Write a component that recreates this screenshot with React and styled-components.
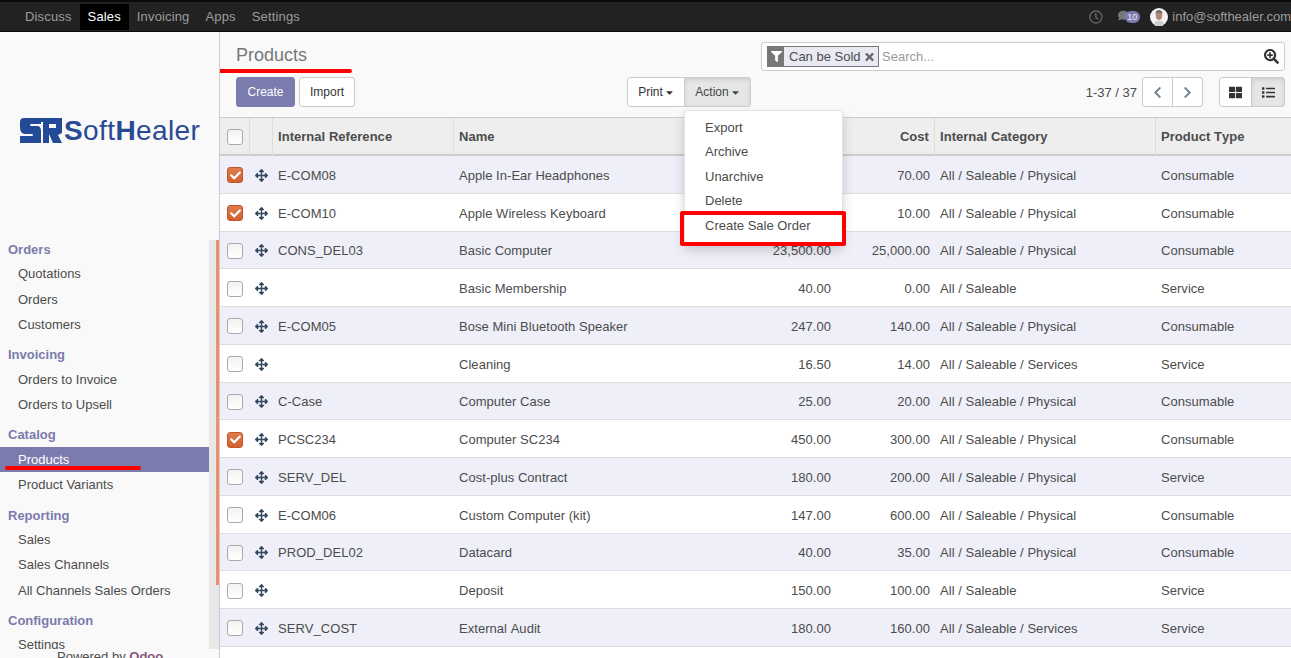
import styled, { createGlobalStyle } from "styled-components";
import {
  FaArrowsAlt,
  FaCaretDown,
  FaCheck,
  FaChevronLeft,
  FaChevronRight,
  FaComment,
  FaFilter,
  FaList,
  FaRegClock,
  FaSearchPlus,
  FaThLarge,
  FaTimes,
} from "react-icons/fa";

const GlobalStyle = createGlobalStyle`
  html, body {
    margin: 0;
    height: 100%;
    overflow: hidden;
    background: #fff;
    font-family: "Liberation Sans", Arial, sans-serif;
    font-size: 13px;
    color: #4c4c4c;
  }
  * { box-sizing: border-box; }
`;

const Page = styled.div`
  display: flex;
  flex-direction: column;
  width: 1291px;
  height: 658px;
  overflow: hidden;
`;

const TopBar = styled.header`
  display: flex;
  align-items: center;
  justify-content: space-between;
  flex: none;
  height: 32px;
  padding-left: 17px;
  background: #222;
  border-top: 2px solid #0a0a0a;
  border-bottom: 1px solid #0a0a0a;
  overflow: hidden;
`;

const NavLinks = styled.nav`
  display: flex;
  align-items: center;
  letter-spacing: 0.15px;
`;

const NavLink = styled.a`
  display: flex;
  align-items: center;
  height: 26px;
  padding: 0 8px;
  color: ${(p) => (p.$active ? "#fff" : "#9d9d9d")};
  background: ${(p) => (p.$active ? "#000" : "transparent")};
`;

const Systray = styled.div`
  display: flex;
  align-items: center;
  flex: none;
  width: 202px;
  color: #666;
  white-space: nowrap;
`;

const ClockIcon = styled(FaRegClock)`
  width: 14px;
  height: 14px;
  margin-right: 15px;
`;

const MessagesIcon = styled.span`
  position: relative;
  display: inline-flex;
  width: 22px;
  height: 14px;
  margin-right: 11px;
  color: #777;
  font-size: 11px;
`;

const Badge = styled.span`
  position: absolute;
  top: 1px;
  left: 7px;
  width: 15px;
  height: 12px;
  border-radius: 6px;
  background: #7c7bad;
  color: #e8e8f4;
  font-size: 9px;
  line-height: 12px;
  text-align: center;
`;

const Avatar = styled.svg`
  flex: none;
  width: 18px;
  height: 18px;
  margin-right: 4px;
`;

const UserMail = styled.span`
  color: #9d9d9d;
`;

const Body = styled.div`
  display: flex;
  flex: 1;
  min-height: 0;
`;

const Sidebar = styled.aside`
  display: flex;
  flex-direction: column;
  flex: none;
  width: 220px;
  background: #f9f9f9;
  border-right: 1px solid #ccc;
`;

const LogoBox = styled.div`
  display: flex;
  align-items: flex-start;
  gap: 2px;
  flex: none;
  height: 208px;
  padding: 86px 0 0 20px;
`;

const LogoMark = styled.svg`
  flex: none;
  width: 42px;
  height: 25px;
`;

const LogoText = styled.span`
  color: #2a4a94;
  font-size: 28px;
  line-height: 26px;
  letter-spacing: 0.4px;
  white-space: nowrap;
  b { font-weight: 700; }
`;

const MenuScroller = styled.div`
  display: flex;
  flex: none;
  height: 409px;
  overflow: hidden;
`;

const Menu = styled.div`
  flex: none;
  width: 209px;
`;

const ScrollTrack = styled.div`
  display: flex;
  justify-content: flex-end;
  flex: none;
  width: 10px;
  background: #e7e7e7;
`;

const ScrollThumb = styled.div`
  width: 3px;
  height: 345px;
  background: #f0906a;
`;

const MenuHeading = styled.div`
  height: 18px;
  margin: ${(p) => (p.$first ? "0" : "8.1px")} 0 3.4px;
  padding-left: 8px;
  color: #7c7bad;
  font-weight: 700;
  line-height: 20px;
`;

const MenuItem = styled.a`
  position: relative;
  display: block;
  height: 25.3px;
  padding-left: 18px;
  line-height: 25.3px;
  color: ${(p) => (p.$active ? "#fff" : "#4c4c4c")};
  background: ${(p) => (p.$active ? "#7c7bad" : "transparent")};
`;

const SidebarMark = styled.span`
  position: absolute;
  left: 5px;
  top: 19px;
  width: 136px;
  height: 4px;
  border-radius: 2px;
  background: #f00;
`;

const PoweredBy = styled.div`
  flex: none;
  padding-left: 57px;
  color: #4c4c4c;
  line-height: 15px;
  b { color: #875a7b; }
`;

const Main = styled.main`
  display: flex;
  flex-direction: column;
  flex: 1;
  min-width: 0;
  overflow: hidden;
`;

const ControlPanel = styled.section`
  flex: none;
  height: 86px;
  padding: 10px 6px 0 16px;
  background: #f9f9f9;
  border-bottom: 1px solid #ccc;
`;

const PanelTop = styled.div`
  display: flex;
  justify-content: space-between;
  align-items: flex-start;
  height: 29px;
  margin-bottom: 6px;
`;

const Title = styled.h1`
  position: relative;
  margin: 0;
  color: #777;
  font-size: 18px;
  font-weight: 400;
  line-height: 26px;
`;

const TitleMark = styled.span`
  position: absolute;
  left: -21px;
  top: 27px;
  width: 137px;
  height: 4px;
  border-radius: 2px;
  background: #f00;
`;

const SearchBox = styled.div`
  display: flex;
  align-items: center;
  width: 524px;
  height: 29px;
  padding: 0 5px;
  background: #fff;
  border: 1px solid #ccc;
  border-radius: 3px;
`;

const Facet = styled.div`
  display: flex;
  align-items: center;
  flex: none;
  width: 112px;
  height: 21px;
  background: #e9e9f3;
  border: 1px solid #777;
`;

const FacetIcon = styled.span`
  display: flex;
  align-items: center;
  justify-content: center;
  width: 16px;
  height: 100%;
  margin-right: 5px;
  background: #777;
  color: #fff;
  font-size: 11px;
`;

const FacetClose = styled(FaTimes)`
  width: 11px;
  height: 12px;
  margin-left: 3px;
  color: #666;
`;

const SearchHint = styled.span`
  flex: 1;
  margin-left: 3px;
  color: #999;
`;

const SearchIcon = styled(FaSearchPlus)`
  width: 15px;
  height: 15px;
  color: #333;
`;

const PanelBottom = styled.div`
  display: grid;
  grid-template-columns: 391px 1fr auto;
  align-items: center;
  height: 30px;
`;

const Buttons = styled.div`
  display: flex;
  gap: 4px;
`;

const Button = styled.button`
  width: ${(p) => p.$w}px;
  height: 30px;
  padding: 0;
  font: inherit;
  font-size: 12px;
  color: ${(p) => (p.$primary ? "#fff" : "#333")};
  background: ${(p) => (p.$primary ? "#7c7bad" : "#fff")};
  border: 1px solid ${(p) => (p.$primary ? "#7c7bad" : "#ccc")};
  border-radius: 3px;
`;

const Group = styled.div`
  position: relative;
  display: inline-flex;
  width: fit-content;
  height: 30px;
`;

const GroupButton = styled.button`
  display: flex;
  align-items: center;
  justify-content: center;
  width: ${(p) => p.$w}px;
  height: 30px;
  padding: 0;
  margin-left: -1px;
  font: inherit;
  font-size: 12px;
  color: ${(p) => (p.$active ? "#444" : "#333")};
  background: ${(p) => (p.$active ? "#e6e6e6" : "#fff")};
  border: 1px solid #ccc;
  box-shadow: ${(p) => (p.$active ? "inset 0 2px 4px rgba(0,0,0,.1)" : "none")};
  &:first-child { margin-left: 0; border-radius: 3px 0 0 3px; }
  &:last-of-type { border-radius: 0 3px 3px 0; }
`;

const Caret = styled(FaCaretDown)`
  width: 9px;
  height: 11px;
  margin: 1px 0 0 2px;
`;

const Dropdown = styled.div`
  position: absolute;
  z-index: 5;
  top: 33px;
  left: 57px;
  width: 159px;
  height: 134px;
  padding: 5px 0;
  background: #fff;
  border: 1px solid #e2e2e2;
  border-radius: 3px;
  box-shadow: 0 6px 12px rgba(0, 0, 0, 0.175);
`;

const DropdownItem = styled.div`
  height: 24.4px;
  padding-left: 20px;
  line-height: 24.4px;
  color: #4c4c4c;
`;

const HighlightBox = styled.div`
  position: absolute;
  top: 100px;
  left: -5px;
  width: 166px;
  height: 35px;
  border: 4px solid #f00;
  border-radius: 2px;
`;

const PagerArea = styled.div`
  display: flex;
  align-items: center;
`;

const PagerText = styled.span`
  margin-right: 5px;
  color: #4c4c4c;
`;

const ArrowIcon = styled.span`
  display: flex;
  color: #7a8590;
  font-size: 13px;
`;

const ViewGroup = styled(Group)`
  margin-left: 16px;
`;

const ViewIcon = styled.span`
  display: flex;
  color: #333;
  font-size: 13px;
`;

const GRID = "30px 23px 181px 246px 136px 99px 221px 135px";

const ListTable = styled.div`
  flex: none;
  width: 1071px;
  letter-spacing: 0.04px;
  font-kerning: none;
`;

const HeaderRow = styled.div`
  display: grid;
  grid-template-columns: ${GRID};
  height: 38px;
  background: #eee;
  border-bottom: 2px solid #ccc;
  font-weight: 700;
`;

const HeaderCell = styled.div`
  padding: 0 5px;
  line-height: 38px;
  text-align: ${(p) => (p.$right ? "right" : "left")};
  border-right: 1px solid ${(p) => (p.$last ? "transparent" : "#ddd")};
  white-space: nowrap;
  display: ${(p) => (p.$check ? "flex" : "block")};
  align-items: center;
`;

const Row = styled.div`
  display: grid;
  grid-template-columns: ${GRID};
  align-items: center;
  height: 37.75px;
  padding-top: 2px;
  background: ${(p) => (p.$striped ? "#eeeff8" : "#fff")};
  border-bottom: 1px solid #ddd;
`;

const Cell = styled.div`
  padding: 0 5px;
  text-align: ${(p) => (p.$right ? "right" : "left")};
  white-space: nowrap;
`;

const Check = styled.span`
  display: flex;
  align-items: center;
  justify-content: center;
  width: 16px;
  height: 16px;
  margin-left: 2px;
  border: 1px solid ${(p) => (p.$on ? "#c2562c" : "#aaa")};
  border-radius: 3px;
  background: ${(p) => (p.$on ? "linear-gradient(#e07a4c, #d2622f)" : "linear-gradient(#f2f2f2, #fff)")};
  color: #fff;
  font-size: 11px;
`;

const HandleCell = styled.div`
  display: flex;
  justify-content: center;
  color: #34495e;
  font-size: 13px;
`;

const rows = [
  { ref: "E-COM08", name: "Apple In-Ear Headphones", price: "", cost: "70.00", cat: "All / Saleable / Physical", type: "Consumable", on: true },
  { ref: "E-COM10", name: "Apple Wireless Keyboard", price: "", cost: "10.00", cat: "All / Saleable / Physical", type: "Consumable", on: true },
  { ref: "CONS_DEL03", name: "Basic Computer", price: "23,500.00", cost: "25,000.00", cat: "All / Saleable / Physical", type: "Consumable" },
  { ref: "", name: "Basic Membership", price: "40.00", cost: "0.00", cat: "All / Saleable", type: "Service" },
  { ref: "E-COM05", name: "Bose Mini Bluetooth Speaker", price: "247.00", cost: "140.00", cat: "All / Saleable / Physical", type: "Consumable" },
  { ref: "", name: "Cleaning", price: "16.50", cost: "14.00", cat: "All / Saleable / Services", type: "Service" },
  { ref: "C-Case", name: "Computer Case", price: "25.00", cost: "20.00", cat: "All / Saleable / Physical", type: "Consumable" },
  { ref: "PCSC234", name: "Computer SC234", price: "450.00", cost: "300.00", cat: "All / Saleable / Physical", type: "Consumable", on: true },
  { ref: "SERV_DEL", name: "Cost-plus Contract", price: "180.00", cost: "200.00", cat: "All / Saleable / Physical", type: "Service" },
  { ref: "E-COM06", name: "Custom Computer (kit)", price: "147.00", cost: "600.00", cat: "All / Saleable / Physical", type: "Consumable" },
  { ref: "PROD_DEL02", name: "Datacard", price: "40.00", cost: "35.00", cat: "All / Saleable / Physical", type: "Consumable" },
  { ref: "", name: "Deposit", price: "150.00", cost: "100.00", cat: "All / Saleable", type: "Service" },
  { ref: "SERV_COST", name: "External Audit", price: "180.00", cost: "160.00", cat: "All / Saleable / Services", type: "Service" },
];

const menu = [
  { title: "Orders", items: ["Quotations", "Orders", "Customers"] },
  { title: "Invoicing", items: ["Orders to Invoice", "Orders to Upsell"] },
  { title: "Catalog", items: ["Products", "Product Variants"] },
  { title: "Reporting", items: ["Sales", "Sales Channels", "All Channels Sales Orders"] },
  { title: "Configuration", items: ["Settings"] },
];

export default function App() {
  return (
    <Page>
      <GlobalStyle />
      <TopBar>
        <NavLinks>
          <NavLink>Discuss</NavLink>
          <NavLink $active>Sales</NavLink>
          <NavLink>Invoicing</NavLink>
          <NavLink>Apps</NavLink>
          <NavLink>Settings</NavLink>
        </NavLinks>
        <Systray>
          <ClockIcon />
          <MessagesIcon>
            <FaComment />
            <Badge>10</Badge>
          </MessagesIcon>
          <Avatar viewBox="0 0 18 18">
            <circle cx="9" cy="9" r="9" fill="#f4f4f4" />
            <path d="M4 17c0-3 2-4.500 5-4.500s5 1.500 5 4.500a9 9 0 0 1-10 0z" fill="#cfcfcf" />
            <ellipse cx="9" cy="7.500" rx="3.200" ry="4.400" fill="#b58a74" />
            <path d="M5.500 6c0-3 1.600-4 3.500-4s3.500 1 3.500 4c-1-1.500-6-1.500-7 0z" fill="#77706c" />
          </Avatar>
          <UserMail>info@softhealer.com</UserMail>
        </Systray>
      </TopBar>
      <Body>
        <Sidebar>
          <LogoBox>
            <LogoMark viewBox="0 0 42 25">
              <path fill="#234a96" d="M4 0H23V4H21V6H11Q10 6 10 7T11 8H17Q21 8 21 13V25H0V18H12Q13 18 13 17T12 16H5Q0 16 0 9V4Q0 0 4 0z" />
              <path fill="#234a96" fillRule="evenodd" d="M23 0H42V15L38 17L42 25H33L29 16H29V25H23zM29 6H36V10H29z" />
            </LogoMark>
            <LogoText><b>S</b>oft<b>H</b>ealer</LogoText>
          </LogoBox>
          <MenuScroller>
            <Menu>
              {menu.map((section, i) => (
                <div key={section.title}>
                  <MenuHeading $first={i === 0}>{section.title}</MenuHeading>
                  {section.items.map((item) => (
                    <MenuItem key={item} $active={item === "Products"}>
                      {item}
                      {item === "Products" && <SidebarMark />}
                    </MenuItem>
                  ))}
                </div>
              ))}
            </Menu>
            <ScrollTrack>
              <ScrollThumb />
            </ScrollTrack>
          </MenuScroller>
          <PoweredBy>Powered by <b>Odoo</b></PoweredBy>
        </Sidebar>
        <Main>
          <ControlPanel>
            <PanelTop>
              <Title>
                Products
                <TitleMark />
              </Title>
              <SearchBox>
                <Facet>
                  <FacetIcon><FaFilter /></FacetIcon>
                  Can be Sold
                  <FacetClose />
                </Facet>
                <SearchHint>Search...</SearchHint>
                <SearchIcon />
              </SearchBox>
            </PanelTop>
            <PanelBottom>
              <Buttons>
                <Button $primary $w={59}>Create</Button>
                <Button $w={56}>Import</Button>
              </Buttons>
              <Group>
                <GroupButton $w={58}>Print<Caret /></GroupButton>
                <GroupButton $w={67} $active>Action<Caret /></GroupButton>
                <Dropdown>
                  <DropdownItem>Export</DropdownItem>
                  <DropdownItem>Archive</DropdownItem>
                  <DropdownItem>Unarchive</DropdownItem>
                  <DropdownItem>Delete</DropdownItem>
                  <DropdownItem>Create Sale Order</DropdownItem>
                  <HighlightBox />
                </Dropdown>
              </Group>
              <PagerArea>
                <PagerText>1-37 / 37</PagerText>
                <Group>
                  <GroupButton $w={31}><ArrowIcon><FaChevronLeft /></ArrowIcon></GroupButton>
                  <GroupButton $w={31}><ArrowIcon><FaChevronRight /></ArrowIcon></GroupButton>
                </Group>
                <ViewGroup>
                  <GroupButton $w={33}><ViewIcon><FaThLarge /></ViewIcon></GroupButton>
                  <GroupButton $w={34} $active><ViewIcon><FaList /></ViewIcon></GroupButton>
                </ViewGroup>
              </PagerArea>
            </PanelBottom>
          </ControlPanel>
          <ListTable>
            <HeaderRow>
              <HeaderCell $check><Check /></HeaderCell>
              <HeaderCell />
              <HeaderCell>Internal Reference</HeaderCell>
              <HeaderCell>Name</HeaderCell>
              <HeaderCell $right>Sales Price</HeaderCell>
              <HeaderCell $right>Cost</HeaderCell>
              <HeaderCell>Internal Category</HeaderCell>
              <HeaderCell $last>Product Type</HeaderCell>
            </HeaderRow>
            {rows.map((r, i) => (
              <Row key={r.name} $striped={i % 2 === 0}>
                <Cell><Check $on={r.on}>{r.on && <FaCheck />}</Check></Cell>
                <HandleCell><FaArrowsAlt /></HandleCell>
                <Cell>{r.ref}</Cell>
                <Cell>{r.name}</Cell>
                <Cell $right>{r.price}</Cell>
                <Cell $right>{r.cost}</Cell>
                <Cell>{r.cat}</Cell>
                <Cell>{r.type}</Cell>
              </Row>
            ))}
          </ListTable>
        </Main>
      </Body>
    </Page>
  );
}
